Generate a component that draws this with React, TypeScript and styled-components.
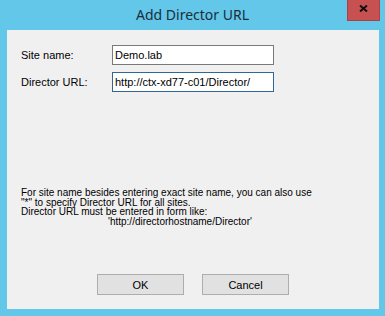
import styled, { createGlobalStyle } from "styled-components";

const GlobalStyle = createGlobalStyle`
  html, body {
    margin: 0;
    padding: 0;
    background: #63c7ea;
  }
  * {
    box-sizing: border-box;
  }
`;

export default function App() {
  return (
    <>
      <GlobalStyle />
      <Window>
        <TitleBar>
          <span />
          <Title>Add Director URL</Title>
          <CloseButton aria-label="Close">
            <svg width="9" height="7" viewBox="0 0 9 7">
              <path d="M1 0.5 L8 6.5 M8 0.5 L1 6.5" stroke="#111" strokeWidth="2" />
            </svg>
          </CloseButton>
        </TitleBar>
        <Client>
          <Form>
            <Label>Site name:</Label>
            <TextBox defaultValue="Demo.lab" />
            <Label>Director URL:</Label>
            <TextBox $focused defaultValue="http://ctx-xd77-c01/Director/" />
          </Form>
          <Help>
            <p>For site name besides entering exact site name, you can also use</p>
            <p>"*" to specify Director URL for all sites.</p>
            <p>Director URL must be entered in form like:</p>
            <p className="indent">'http://directorhostname/Director'</p>
          </Help>
          <Buttons>
            <Button>OK</Button>
            <Button>Cancel</Button>
          </Buttons>
        </Client>
      </Window>
    </>
  );
}

const Window = styled.div`
  width: 385px;
  height: 316px;
  display: flex;
  flex-direction: column;
  background: #63c7ea;
`;

const TitleBar = styled.div`
  height: 30px;
  display: grid;
  grid-template-columns: 1fr auto 1fr;
  align-items: start;
`;

const Title = styled.h1`
  margin: 0;
  padding-top: 5px;
  font-family: "Noto Sans", "Open Sans", sans-serif;
  font-size: 14px;
  font-weight: 400;
  line-height: 19px;
  color: #1b2e3b;
`;

const CloseButton = styled.div`
  justify-self: end;
  width: 33px;
  height: 21px;
  margin-right: 5px;
  background: #c75050;
  border: 1px solid #a84343;
  border-top: none;
  display: flex;
  align-items: center;
  justify-content: center;
  padding-bottom: 3px;
`;

const Client = styled.div`
  flex: 1;
  margin: 0 6px 7px 7px;
  background: #f0f0f0;
  display: flex;
  flex-direction: column;
  padding: 15px 0 14px 14px;
  font-family: "Liberation Sans", Arial, sans-serif;
  color: #000;
`;

const Form = styled.div`
  display: grid;
  grid-template-columns: 91px 162px;
  row-gap: 7px;
  align-items: center;
`;

const Label = styled.label`
  font-size: 11px;
  line-height: 13px;
`;

const TextBox = styled.input<{ $focused?: boolean }>`
  width: 162px;
  height: 20px;
  margin: 0;
  padding: 0 2px;
  border: 1px solid ${(p) => (p.$focused ? "#2f6796" : "#7a7a7a")};
  background: #fff;
  font-family: "Liberation Sans", Arial, sans-serif;
  font-size: 11px;
  color: #000;
  outline: none;
`;

const Help = styled.div`
  margin-top: 96px;
  font-size: 10px;
  line-height: 9.7px;
  p {
    margin: 0;
  }
  .indent {
    padding-left: 87px;
  }
`;

const Buttons = styled.div`
  margin-top: auto;
  display: flex;
  justify-content: center;
  gap: 18px;
  padding-right: 14px;
`;

const Button = styled.button`
  width: 87px;
  height: 21px;
  margin: 0;
  padding: 0;
  background: #e1e1e1;
  border: 1px solid #adadad;
  border-radius: 0;
  font-family: "Liberation Sans", Arial, sans-serif;
  font-size: 11px;
  color: #000;
`;
